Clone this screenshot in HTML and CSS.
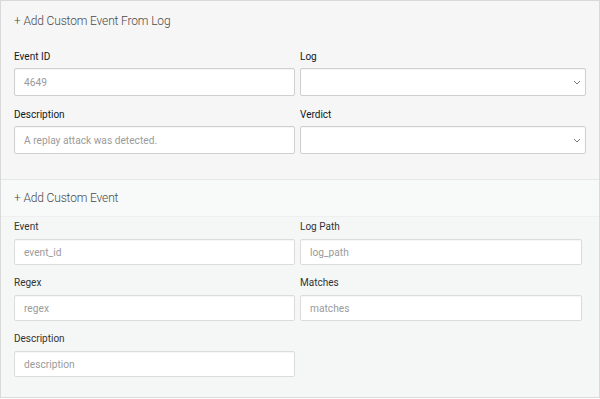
FILE: index.html
```html
<!DOCTYPE html>
<html>
<head>
  <meta charset="UTF-8">
  <title>Custom Events</title>
  <link rel="stylesheet" href="styles.css">
</head>
<body>
  <div class="panel">
    <div class="from-log">
      <div class="section-title">+ Add Custom Event From Log</div>
      <form class="fields">
        <div class="field">
          <label for="event-id">Event ID</label>
          <input type="text" id="event-id" placeholder="4649">
        </div>
        <div class="field">
          <label for="log">Log</label>
          <div class="select-wrap">
            <select id="log"></select>
            <svg class="chevron" width="8" height="5" viewBox="0 0 8 5"><path d="M1 1l3 3 3-3" fill="none" stroke="#777" stroke-width="1"/></svg>
          </div>
        </div>
        <div class="field">
          <label for="log-desc">Description</label>
          <input type="text" id="log-desc" placeholder="A replay attack was detected.">
        </div>
        <div class="field">
          <label for="verdict">Verdict</label>
          <div class="select-wrap">
            <select id="verdict"></select>
            <svg class="chevron" width="8" height="5" viewBox="0 0 8 5"><path d="M1 1l3 3 3-3" fill="none" stroke="#777" stroke-width="1"/></svg>
          </div>
        </div>
      </form>
    </div>

    <div class="custom-head">+ Add Custom Event</div>

    <div class="custom">
      <form class="fields small">
        <div class="field">
          <label for="event">Event</label>
          <input type="text" id="event" placeholder="event_id">
        </div>
        <div class="field">
          <label for="log-path">Log Path</label>
          <input type="text" id="log-path" placeholder="log_path">
        </div>
        <div class="field">
          <label for="regex">Regex</label>
          <input type="text" id="regex" placeholder="regex">
        </div>
        <div class="field">
          <label for="matches">Matches</label>
          <input type="text" id="matches" placeholder="matches">
        </div>
        <div class="field">
          <label for="description">Description</label>
          <input type="text" id="description" placeholder="description">
        </div>
      </form>
    </div>
  </div>
</body>
</html>
```

FILE: styles.css
```css
body {
  margin: 0;
  font-family: Roboto, "Liberation Sans", Arial, sans-serif;
  background-color: #ffffff;
}

.panel {
  width: 598px;
  border: 1px solid #d9d9d9;
  background-color: #f6f6f6;
}

.from-log {
  padding: 0 13px 25px 13px;
  border-bottom: 1px solid #e4e7e7;
}

.section-title,
.custom-head {
  font-size: 12px;
  font-weight: 300;
  letter-spacing: -0.15px;
  color: #4a4a4a;
  line-height: 40px;
}

.fields {
  display: grid;
  grid-template-columns: 281px 1fr;
  column-gap: 5px;
  row-gap: 11px;
  margin: 0;
  padding-top: 8px;
}

.field label {
  display: block;
  font-size: 10px;
  font-weight: 400;
  line-height: 16px;
  color: #0e1a27;
  margin-bottom: 3px;
}

.field input,
.field select {
  box-sizing: border-box;
  width: 100%;
  height: 28px;
  margin: 0;
  padding: 0 9px;
  border: 1px solid #cfcfcf;
  border-radius: 2px;
  background-color: #ffffff;
  box-shadow: inset 0 1px 1px rgba(0, 0, 0, 0.04);
  font-family: Roboto, "Liberation Sans", Arial, sans-serif;
  font-size: 10.2px;
  color: #333;
  outline: none;
  display: block;
}

.field input::placeholder {
  color: #9a9a9a;
}

.select-wrap {
  position: relative;
}

.field select {
  appearance: none;
  -webkit-appearance: none;
}

.chevron {
  position: absolute;
  right: 5px;
  top: 12px;
}

.custom-head {
  background-color: #f8f9f9;
  padding: 0 13px;
  line-height: 36px;
  border-bottom: 1px solid #eef0f0;
}

.custom {
  background-color: #f5f7f7;
  padding: 3px 16px 20px 13px;
}

.fields.small {
  grid-template-columns: 281px 282px;
  padding-top: 0;
}

.fields.small label {
  color: #333;
  line-height: 14px;
  margin-bottom: 5px;
}

.fields.small input {
  height: 26px;
  border-color: #dcdcdc;
}
```
